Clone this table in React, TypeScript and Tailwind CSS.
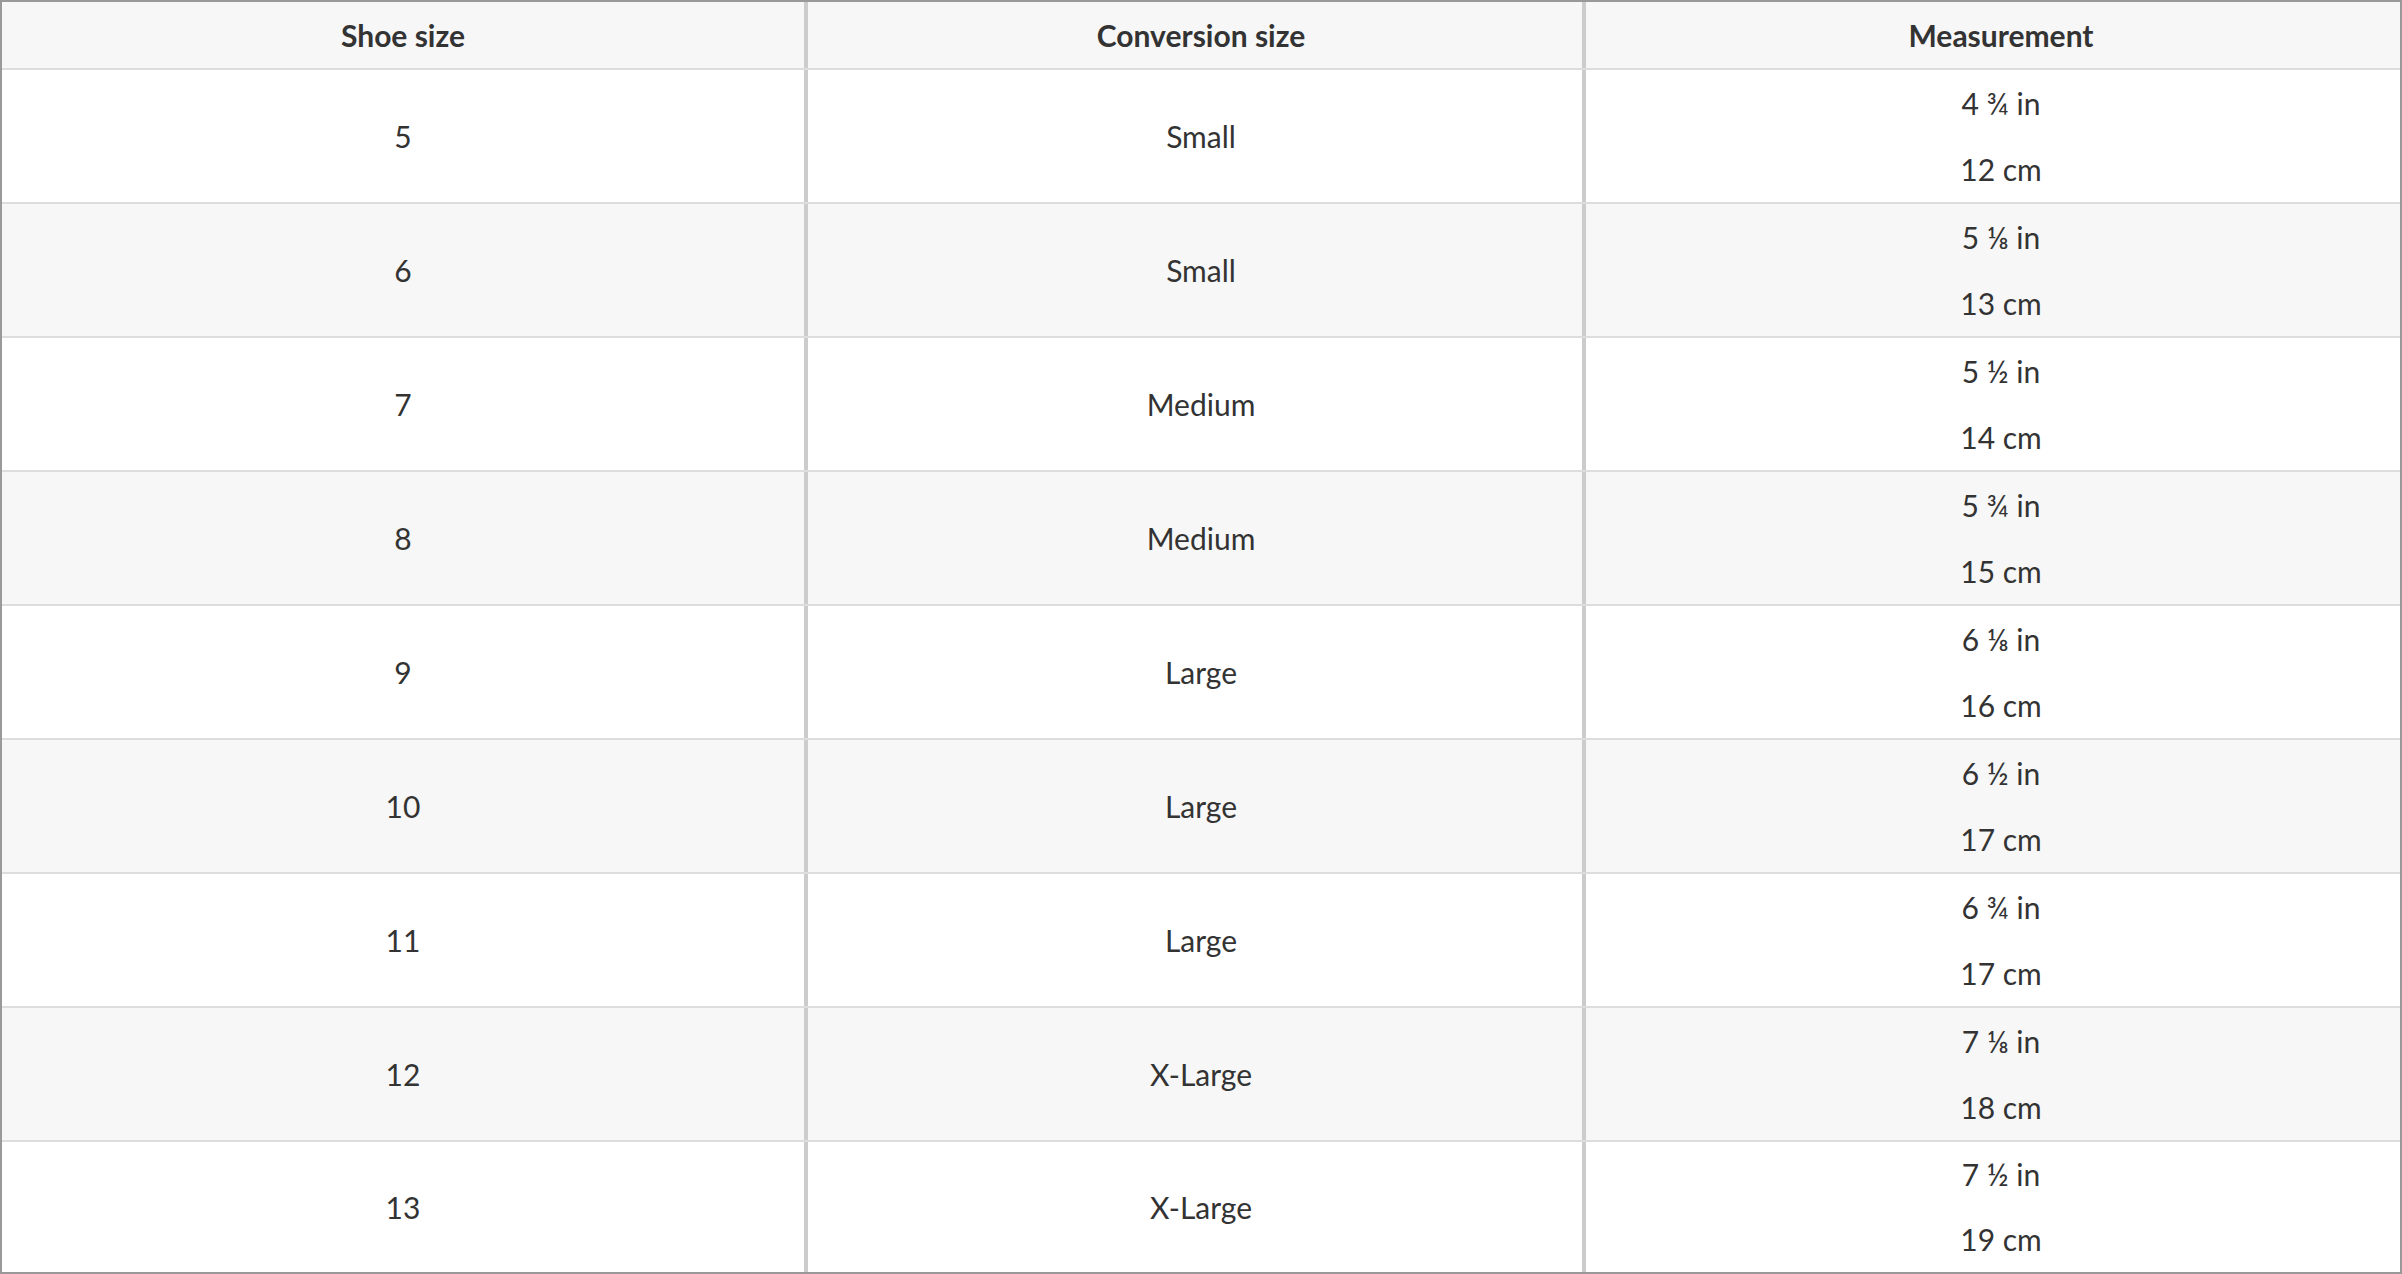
import React from 'react';

const rows = [
  { shoe: '5', size: 'Small', inch: '4 ¾ in', cm: '12 cm' },
  { shoe: '6', size: 'Small', inch: '5 ⅛ in', cm: '13 cm' },
  { shoe: '7', size: 'Medium', inch: '5 ½ in', cm: '14 cm' },
  { shoe: '8', size: 'Medium', inch: '5 ¾ in', cm: '15 cm' },
  { shoe: '9', size: 'Large', inch: '6 ⅛ in', cm: '16 cm' },
  { shoe: '10', size: 'Large', inch: '6 ½ in', cm: '17 cm' },
  { shoe: '11', size: 'Large', inch: '6 ¾ in', cm: '17 cm' },
  { shoe: '12', size: 'X-Large', inch: '7 ⅛ in', cm: '18 cm' },
  { shoe: '13', size: 'X-Large', inch: '7 ½ in', cm: '19 cm' },
];

const App = () => (
  <div className="w-[2402px] h-[1274px] overflow-hidden bg-white text-[#333] font-['Lato','Noto_Sans',sans-serif] text-[30px]">
    <div className="flex flex-col border-2 border-[#999] h-full">
      <div className="flex h-[68px] shrink-0 bg-[#f7f7f7] border-b-2 border-[#ddd] font-bold">
        <div className="w-[802px] flex items-center justify-center">Shoe size</div>
        <div className="w-[4px] bg-[#ccc]" />
        <div className="w-[774px] flex items-center justify-center pl-[12px]">Conversion size</div>
        <div className="w-[4px] bg-[#ccc]" />
        <div className="flex-1 flex items-center justify-center pl-[16px]">Measurement</div>
      </div>
      {rows.map((r, i) => (
        <div
          key={r.shoe}
          className={`flex h-[134px] shrink-0 last:h-auto last:flex-1 last:min-h-0 last:border-b-0 border-b-2 border-[#ddd] ${i % 2 ? 'bg-[#f7f7f7]' : 'bg-white'}`}
        >
          <div className="w-[802px] flex items-center justify-center">{r.shoe}</div>
          <div className="w-[4px] bg-[#ccc]" />
          <div className="w-[774px] flex items-center justify-center pl-[12px]">{r.size}</div>
          <div className="w-[4px] bg-[#ccc]" />
          <div className="flex-1 flex flex-col pl-[16px]">
            <div className="flex-1 flex items-center justify-center">{r.inch}</div>
            <div className="flex-1 flex items-center justify-center">{r.cm}</div>
          </div>
        </div>
      ))}
    </div>
  </div>
);

export default App;
